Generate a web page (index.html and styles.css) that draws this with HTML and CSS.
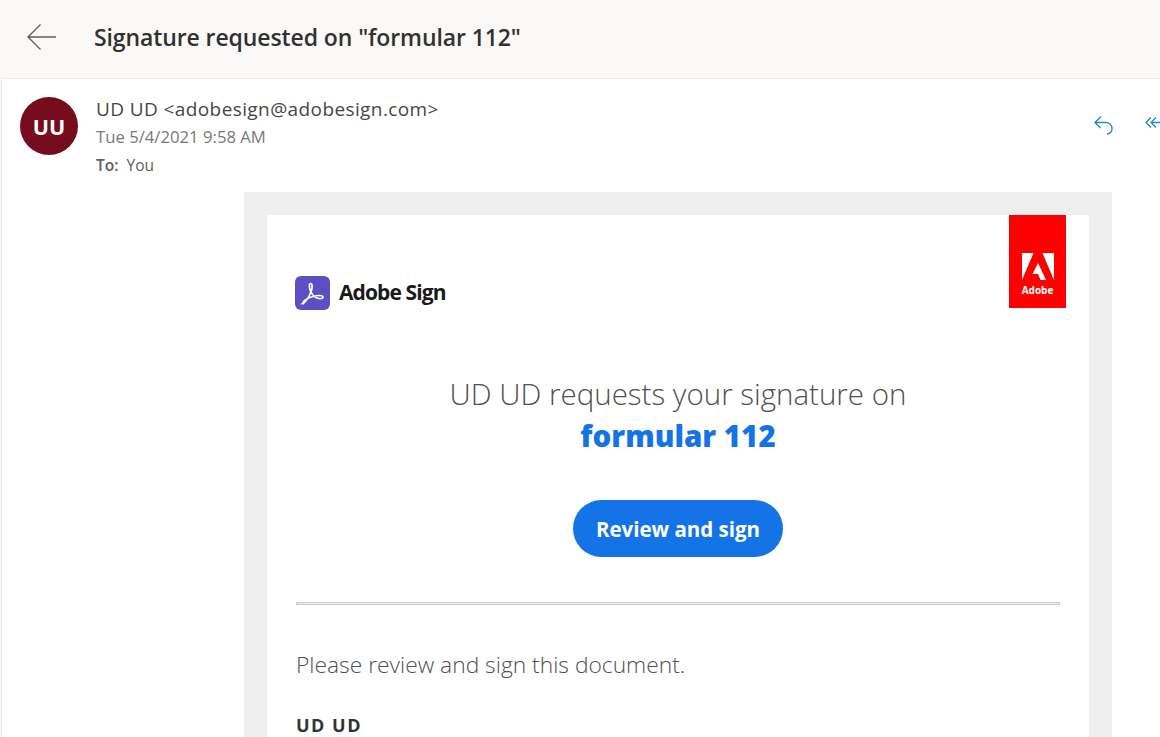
FILE: index.html
```html
<!DOCTYPE html>
<html lang="en">
<head>
    <meta charset="UTF-8">
    <title>Signature requested on "formular 112"</title>
    <link rel="stylesheet" href="styles.css">
</head>
<body>
    <header class="subject-bar">
        <svg class="back-icon" width="32" height="28" viewBox="0 0 32 28" fill="none" stroke="#605e5c" stroke-width="1.3">
            <path d="M30 14H2M14.500 1.500L2 14l12.500 12.500"/>
        </svg>
        <h1 class="subject">Signature requested on "formular 112"</h1>
    </header>

    <main class="message">
        <div class="message-head">
            <div class="avatar">UU</div>
            <div class="sender-info">
                <div class="sender">UD UD &lt;adobesign@adobesign.com&gt;</div>
                <div class="sent-date">Tue 5/4/2021 9:58 AM</div>
                <div class="recipient"><b>To:</b> You</div>
            </div>
            <div class="actions">
                <svg width="20" height="22" viewBox="0 0 20 22" fill="none" stroke="#2b88c8" stroke-width="1.4">
                    <path d="M8 2.500L2 8.500l5.500 5.500M2 8.500h10.500a6 6 0 0 1 6.500 6c0 3-2 5-5 5.500"/>
                </svg>
                <svg width="20" height="22" viewBox="0 0 20 22" fill="none" stroke="#2b88c8" stroke-width="1.4">
                    <path d="M7 3.500L2 8.500l5 5M12 3.500L7 8.500l5 5M7 8.500h13"/>
                </svg>
            </div>
        </div>

        <div class="mail-frame">
            <div class="mail-card">
                <div class="brand-row">
                    <div class="sign-logo">
                        <svg width="35" height="34" viewBox="0 0 35 34">
                            <rect width="35" height="34" rx="6" fill="#5c4fc4"/>
                            <path d="M8 27.500c3.500-2 6.500-7.500 8.500-13 1-3.500.8-7-.8-7s-1.800 3.500-.2 7.500c2 4.500 5 7 8.500 7.500 2.500.3 4-.5 4-1.500 0-1.800-5-2-10-.5s-9.500 4-10 6.500c-.2 1 .2 1 .5.500z" fill="none" stroke="#fff" stroke-width="1.700"/>
                        </svg>
                        <span class="sign-name">Adobe Sign</span>
                    </div>
                    <div class="adobe-tag">
                        <svg width="32" height="27" viewBox="0 0 32 27" fill="#fff">
                            <path d="M0 0h11.500L0 27zM32 0H20.500L32 27zM16 10l8 17h-5.500l-2.400-6H10.500z"/>
                        </svg>
                        <span class="adobe-word">Adobe</span>
                    </div>
                </div>

                <div class="request">
                    <p class="request-line">UD UD requests your signature on</p>
                    <p class="doc-name">formular 112</p>
                    <a class="sign-btn" href="#">Review and sign</a>
                </div>

                <hr class="divider">

                <p class="note">Please review and sign this document.</p>
                <p class="signoff">UD UD</p>
            </div>
        </div>
    </main>
</body>
</html>
```

FILE: styles.css
```css
* {
    margin: 0;
    padding: 0;
    box-sizing: border-box;
}

body {
    height: 737px;
    overflow: hidden;
    background-color: #faf9f8;
    font-family: 'Open Sans', 'Noto Sans', sans-serif;
    color: #323130;
}

.subject-bar {
    display: flex;
    align-items: center;
    height: 78px;
    padding: 0 0 4px 26px;
    background-color: #faf9f8;
}

.back-icon {
    margin-right: 36px;
}

.subject {
    font-size: 23px;
    font-weight: 600;
    letter-spacing: -0.1px;
    color: #323130;
}

.message {
    height: 659px;
    margin-left: 1px;
    padding-top: 1px;
    background-color: white;
    border-top: 1px solid #edebe9;
    border-left: 1px solid #edebe9;
}

.message-head {
    display: flex;
    height: 112px;
    padding: 17px 0 0 18px;
}

.avatar {
    flex: none;
    display: flex;
    align-items: center;
    justify-content: center;
    width: 58px;
    height: 58px;
    border-radius: 50%;
    background-color: #750b1c;
    color: white;
    font-size: 21.500px;
    font-weight: 700;
}

.sender-info {
    flex: 1;
    padding-left: 18px;
}

.sender {
    font-size: 19px;
    line-height: 24px;
    letter-spacing: 0.4px;
    color: #484644;
}

.sent-date {
    margin-top: 4px;
    font-size: 16.700px;
    line-height: 24px;
    color: #7a7876;
}

.recipient {
    margin-top: 4px;
    font-size: 15.500px;
    line-height: 24px;
    color: #605e5c;
}

.recipient b {
    font-weight: 600;
    margin-right: 4px;
}

.actions {
    display: flex;
    gap: 31px;
    width: 77px;
    padding-top: 17px;
    flex: none;
    margin-right: -10px;
}

.actions svg {
    flex: none;
}

.mail-frame {
    margin-left: 242px;
    width: 868px;
    height: 545px;
    padding: 23px 23px 0;
    background-color: #efefef;
}

.mail-card {
    height: 100%;
    padding: 0 23px 0 29px;
    background-color: white;
}

.brand-row {
    display: flex;
    justify-content: space-between;
    align-items: flex-start;
    height: 93px;
}

.sign-logo {
    display: flex;
    align-items: center;
    gap: 9px;
    height: 34px;
    margin: 61px 0 0 -1px;
}

.sign-name {
    font-size: 21px;
    font-weight: 700;
    letter-spacing: -0.9px;
    line-height: 30px;
    margin-top: -2px;
    color: #1a1a1a;
}

.adobe-tag {
    display: flex;
    flex-direction: column;
    align-items: center;
    justify-content: flex-end;
    width: 57px;
    height: 93px;
    padding-bottom: 11px;
    background-color: #ff0000;
}

.adobe-word {
    margin-top: 3px;
    font-size: 10px;
    line-height: 14px;
    font-weight: 700;
    color: white;
}

.request {
    padding-top: 66px;
    text-align: center;
    padding-right: 6px;
}

.request-line {
    font-size: 29.500px;
    font-weight: 300;
    line-height: 40px;
    color: #505050;
}

.doc-name {
    font-size: 29.500px;
    font-weight: 800;
    line-height: 44px;
    color: #1473e6;
}

.sign-btn {
    display: inline-block;
    margin-top: 42px;
    padding: 0 23px;
    height: 57px;
    line-height: 59px;
    border-radius: 29px;
    background-color: #1473e6;
    color: white;
    font-size: 20.500px;
    font-weight: 700;
    text-decoration: none;
}

.divider {
    margin: 45px 6px 0 0;
    height: 3px;
    border: 1px solid #cccccc;
    background: #efefef;
}

.note {
    margin-top: 44px;
    font-size: 22.800px;
    font-weight: 300;
    line-height: 32px;
    color: #505050;
}

.signoff {
    margin-top: 32px;
    font-size: 18px;
    font-weight: 700;
    letter-spacing: 1.500px;
    line-height: 24px;
    color: #333333;
}
```
